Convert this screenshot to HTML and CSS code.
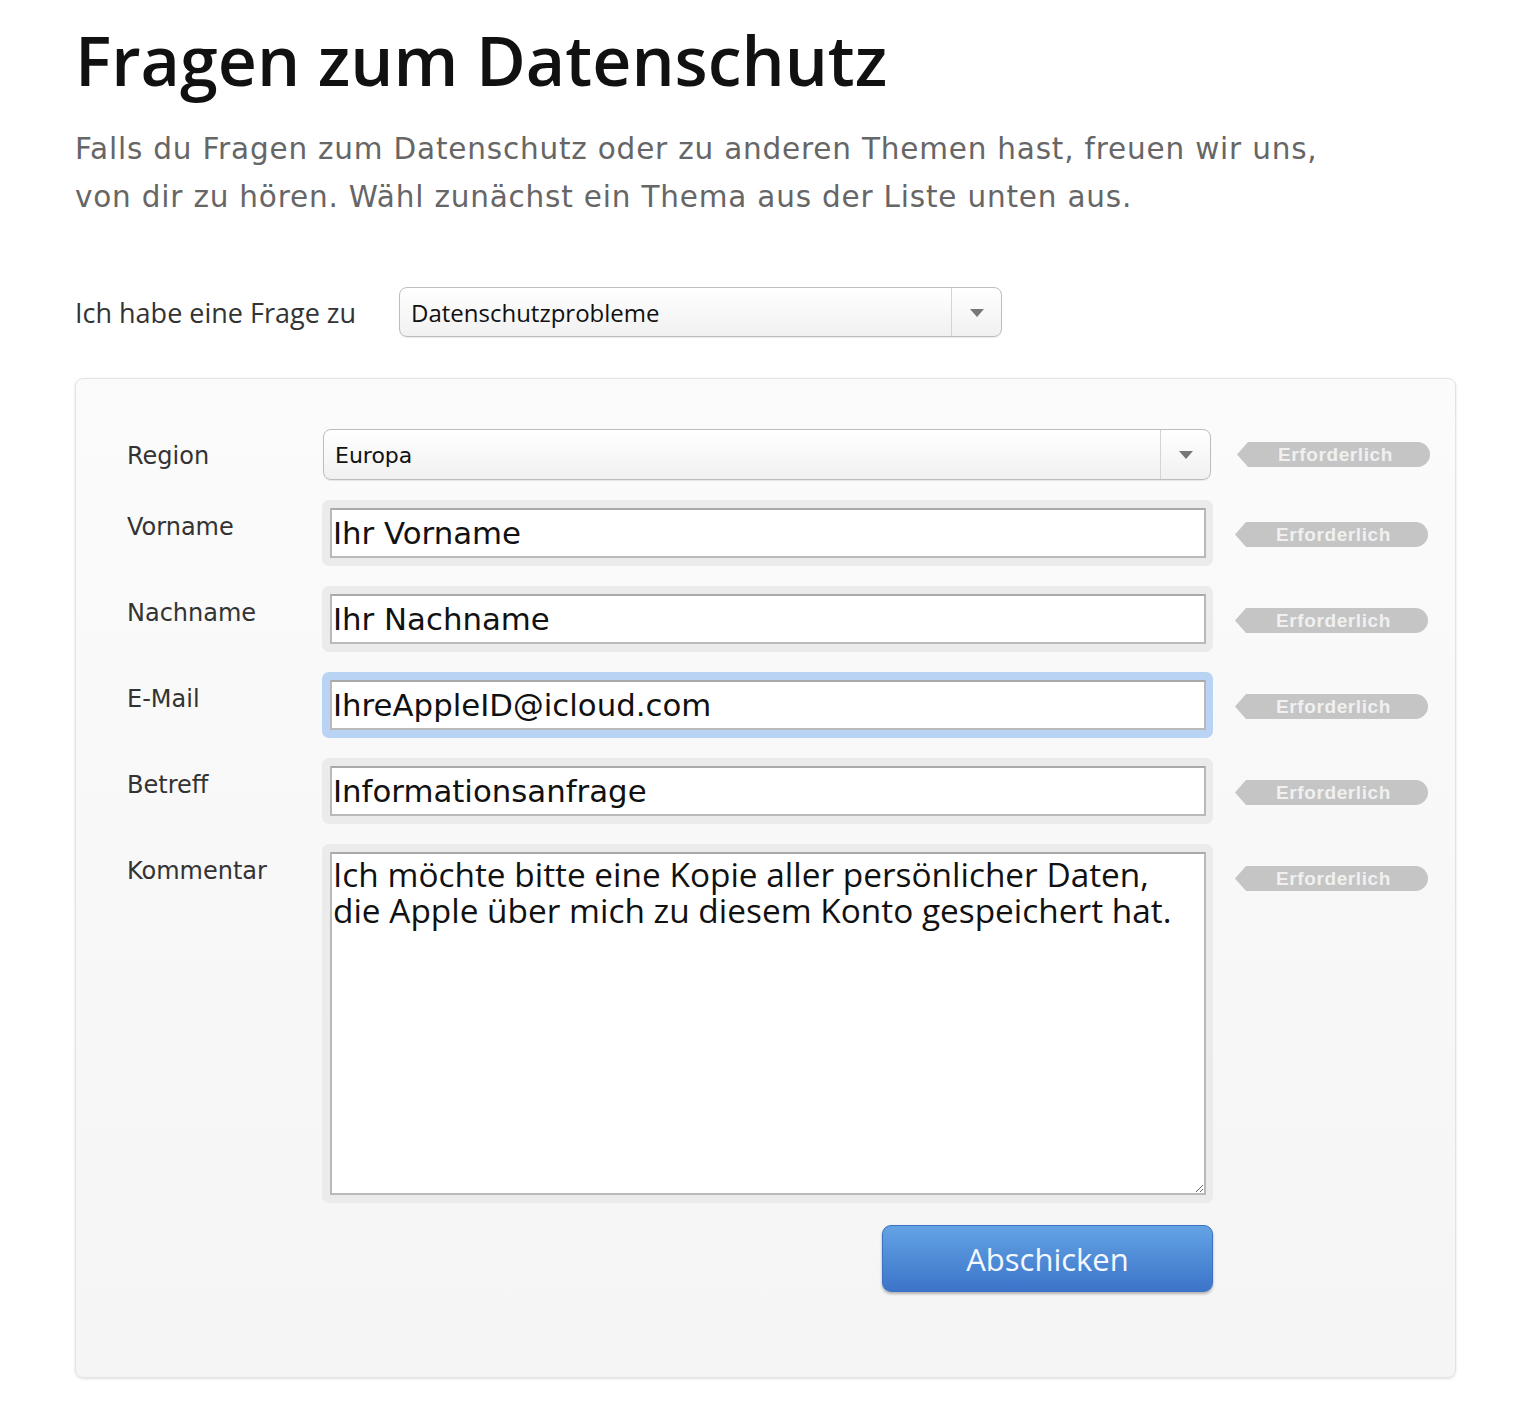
FILE: index.html
```html
<!DOCTYPE html>
<html lang="de">
<head>
<meta charset="utf-8">
<title>Fragen zum Datenschutz</title>
<link rel="stylesheet" href="styles.css">
</head>
<body>
<main class="page">
  <h1 class="title">Fragen zum Datenschutz</h1>
  <p class="intro">Falls du Fragen zum Datenschutz oder zu anderen Themen hast, freuen wir uns,<br>von dir zu hören. Wähl zunächst ein Thema aus der Liste unten aus.</p>

  <div class="topic">
    <span class="topic-label">Ich habe eine Frage zu</span>
    <div class="select topic-select">
      <span class="select-value">Datenschutzprobleme</span>
      <span class="select-arrow"><span class="tri"></span></span>
    </div>
  </div>

  <section class="panel">
    <form class="form">
      <div class="row">
        <label class="label">Region</label>
        <div class="select region-select">
          <span class="select-value region-value">Europa</span>
          <span class="select-arrow"><span class="tri"></span></span>
        </div>
        <span class="badge badge-select">Erforderlich</span>
      </div>

      <div class="row">
        <label class="label">Vorname</label>
        <div class="field"><input class="input" type="text" value="Ihr Vorname"></div>
        <span class="badge">Erforderlich</span>
      </div>

      <div class="row">
        <label class="label">Nachname</label>
        <div class="field"><input class="input" type="text" value="Ihr Nachname"></div>
        <span class="badge">Erforderlich</span>
      </div>

      <div class="row">
        <label class="label">E-Mail</label>
        <div class="field field-focus"><input class="input" type="text" value="IhreAppleID@icloud.com"></div>
        <span class="badge">Erforderlich</span>
      </div>

      <div class="row">
        <label class="label">Betreff</label>
        <div class="field"><input class="input" type="text" value="Informationsanfrage"></div>
        <span class="badge">Erforderlich</span>
      </div>

      <div class="row">
        <label class="label">Kommentar</label>
        <div class="field"><textarea class="textarea">Ich möchte bitte eine Kopie aller persönlicher Daten,
die Apple über mich zu diesem Konto gespeichert hat.</textarea></div>
        <span class="badge">Erforderlich</span>
      </div>

      <div class="row row-submit">
        <span></span>
        <div class="submit-wrap"><button class="submit" type="button">Abschicken</button></div>
      </div>
    </form>
  </section>
</main>
</body>
</html>
```

FILE: styles.css
```css
html, body {
  margin: 0;
  padding: 0;
  background: #ffffff;
}

body {
  font-family: "DejaVu Sans", sans-serif;
  color: #333;
}

.page {
  padding: 18px 0 40px 75px;
  width: 1381px;
}

.title {
  margin: 0;
  font-family: "Open Sans", sans-serif;
  font-weight: 600;
  font-size: 68px;
  line-height: 84px;
  color: #111;
  letter-spacing: 0;
}

.intro {
  margin: 23px 0 0;
  font-family: "DejaVu Sans", sans-serif;
  font-size: 29.5px;
  line-height: 48px;
  letter-spacing: 0.8px;
  color: #666;
}

.topic {
  margin-top: 66px;
  display: flex;
  align-items: center;
  height: 50px;
}

.topic-label {
  width: 324px;
  font-family: "Open Sans", sans-serif;
  font-size: 27px;
  color: #333;
}

.select {
  box-sizing: border-box;
  display: flex;
  align-items: stretch;
  border: 1px solid #bdbdbd;
  border-radius: 8px;
  background: linear-gradient(#ffffff, #f1f1f1);
  box-shadow: 0 1px 1px rgba(0, 0, 0, 0.08);
}

.topic-select {
  width: 603px;
  height: 50px;
}

.select-value {
  flex: 1;
  display: flex;
  align-items: center;
  padding-left: 11px;
  font-family: "Open Sans", sans-serif;
  font-size: 24px;
  color: #111;
}

.region-value {
  font-family: "DejaVu Sans", sans-serif;
  font-size: 22px;
  padding-left: 11px;
  padding-top: 2px;
}

.select-arrow {
  width: 49px;
  border-left: 1px solid #d4d4d4;
  display: flex;
  align-items: center;
  justify-content: center;
}

.tri {
  width: 0;
  height: 0;
  border-left: 7px solid transparent;
  border-right: 7px solid transparent;
  border-top: 8px solid #777;
  margin-top: 1px;
}

.panel {
  margin-top: 41px;
  box-sizing: border-box;
  width: 1381px;
  height: 1000px;
  padding: 50px 0 0 51px;
  border: 1px solid #e3e3e3;
  border-radius: 8px;
  background: linear-gradient(#fbfbfb, #f5f5f5);
  box-shadow: 0 1px 3px rgba(0, 0, 0, 0.12);
}

.form {
  display: flex;
  flex-direction: column;
  gap: 20px;
}

.row {
  display: grid;
  grid-template-columns: 195px 891px 215px;
  column-gap: 0;
  align-items: start;
}

.label {
  padding-top: 12px;
  font-family: "DejaVu Sans", sans-serif;
  font-size: 24px;
  line-height: 30px;
  color: #333;
}

.region-select {
  margin-left: 1px;
  width: 888px;
  height: 51px;
}

.field {
  box-sizing: border-box;
  padding: 8px 7px 8px 8px;
  background: #ebebeb;
  border-radius: 7px;
}

.field-focus {
  background: #b9d3f4;
}

.input {
  display: block;
  box-sizing: border-box;
  width: 100%;
  height: 50px;
  margin: 0;
  padding: 0 1px;
  border: 2px solid #b9b9b9;
  border-top-color: #a9a9a9;
  border-radius: 0;
  background: #fff;
  font-family: "DejaVu Sans", sans-serif;
  font-size: 30.8px;
  color: #111;
  outline: none;
}

.textarea {
  display: block;
  box-sizing: border-box;
  width: 100%;
  height: 343px;
  margin: 0;
  padding: 2px 1px 0;
  border: 2px solid #b9b9b9;
  border-top-color: #a9a9a9;
  border-radius: 0;
  background: #fff;
  font-family: "Open Sans", sans-serif;
  font-size: 33.4px;
  line-height: 36px;
  color: #111;
  outline: none;
  resize: both;
  overflow: hidden;
}

.badge {
  box-sizing: border-box;
  margin: 22px 0 0 22px;
  width: 193px;
  height: 25px;
  padding-left: 4px;
  background: #c5c5c5;
  border-radius: 0 12.5px 12.5px 0;
  clip-path: polygon(11px 0, 100% 0, 100% 100%, 11px 100%, 0 50%);
  font-family: "Liberation Sans", sans-serif;
  font-weight: bold;
  font-size: 19px;
  line-height: 25px;
  letter-spacing: 0.6px;
  color: #f0f0f0;
  text-align: center;
}

.badge-select {
  margin-top: 13px;
  margin-left: 24px;
}

.row-submit {
  margin-top: 2px;
}

.submit-wrap {
  display: flex;
  justify-content: flex-end;
}

.submit {
  width: 331px;
  height: 67px;
  border: 1px solid #3d72c2;
  border-radius: 9px;
  background: linear-gradient(#63a3e4, #3c74c9);
  box-shadow: 0 2px 3px rgba(0, 0, 0, 0.28);
  font-family: "Open Sans", sans-serif;
  font-size: 31px;
  color: #f4f8ff;
  padding: 0;
  cursor: pointer;
}
```
